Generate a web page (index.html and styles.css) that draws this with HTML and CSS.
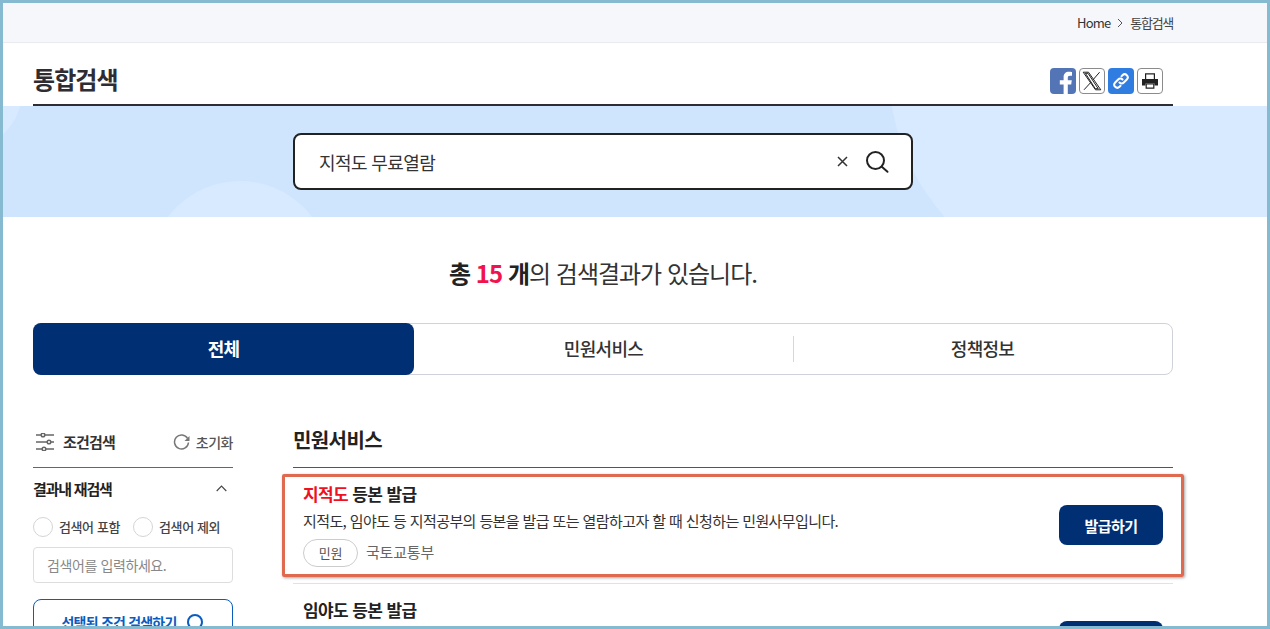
FILE: index.html
```html
<!DOCTYPE html>
<html lang="ko">
<head>
<meta charset="utf-8">
<title>통합검색</title>
<link rel="stylesheet" href="styles.css">
</head>
<body>
<div class="frame">
  <div class="topbar">
    <div class="wrap crumbs">
      <span>Home</span>
      <svg class="crumb-sep" width="6" height="10" viewBox="0 0 6 10"><path d="M1 1l4 4-4 4" fill="none" stroke="#555" stroke-width="1"/></svg>
      <span class="crumb-now">통합검색</span>
    </div>
  </div>
  <div class="wrap title-row">
    <h1>통합검색</h1>
    <div class="shares">
      <span class="share fb"><svg width="26" height="26" viewBox="0 0 26 26"><path d="M17.800 26V16.500h3.400l.6-4.200h-4V9.800c0-1.200.5-2.100 2.200-2.100h2V4.100c-.6-.1-1.900-.3-3.200-.3-3.100 0-5.200 1.900-5.200 5.300v3.200H9.800v4.200h3.800V26z" fill="#fff"/></svg></span>
      <span class="share plain"><svg width="20" height="20" viewBox="0 0 20 20"><path d="M1.200 1.200h5.300l12.300 17.600h-5.300zM3.400 2.300l9.900 15.400h2.900L6 2.300zM17.600 1.200L11 8.800M9 11.200L2 18.800" fill="none" stroke="#222" stroke-width="1"/></svg></span>
      <span class="share link"><svg width="18" height="18" viewBox="0 0 18 18"><g fill="none" stroke="#fff" stroke-width="2" stroke-linecap="round"><path d="M7.500 10.500a3 3 0 0 0 4.300 0l3-3a3 3 0 0 0-4.300-4.300L9.500 4.300"/><path d="M10.500 7.500a3 3 0 0 0-4.300 0l-3 3a3 3 0 0 0 4.300 4.300l1-1"/></g></svg></span>
      <span class="share plain"><svg width="18" height="16" viewBox="0 0 18 16"><path d="M4.600 6.500V.8h8.800v5.700" fill="none" stroke="#222" stroke-width="1.200"/><path d="M1 6h16v6.500h-3.500V10.500h-9v2H1z" fill="#222"/><path d="M5.200 11h7.600v4.200H5.200z" fill="#fff" stroke="#222" stroke-width="1.200"/></svg></span>
    </div>
  </div>
  <section class="band">
    <span class="deco deco-a"></span>
    <span class="deco deco-b"></span>
    <span class="deco deco-c"></span>
    <div class="searchbox">
      <span class="query">지적도 무료열람</span>
      <svg width="11" height="11" viewBox="0 0 11 11"><path d="M1 1l9 9M10 1l-9 9" stroke="#333" stroke-width="1.500"/></svg>
      <svg class="search-ico" width="24" height="24" viewBox="0 0 24 24"><circle cx="10.500" cy="10.500" r="8.500" fill="none" stroke="#222" stroke-width="2"/><path d="M16.800 16.800l5.700 5" stroke="#222" stroke-width="2" stroke-linecap="round"/></svg>
    </div>
  </section>
  <p class="wrap summary"><b>총 <em>15</em> 개</b>의 검색결과가 있습니다.</p>
  <div class="wrap">
    <div class="tabs">
      <div class="tab active">전체</div>
      <div class="tab">민원서비스</div>
      <div class="tab divided">정책정보</div>
    </div>
  </div>
  <div class="wrap content">
    <aside class="side">
      <div class="side-head">
        <span class="side-title">
          <svg width="18" height="18" viewBox="0 0 18 18"><g fill="#fff" stroke="#666" stroke-width="1.500"><path d="M0 2h18M0 9h18M0 16h18"/><circle cx="7" cy="2" r="1.800"/><circle cx="13" cy="9" r="1.800"/><circle cx="8" cy="16" r="1.800"/></g></svg>
          조건검색
        </span>
        <span class="reset">
          <svg width="17" height="17" viewBox="0 0 17 17"><path d="M14.600 5.500A7 7 0 1 0 15.500 9.500" fill="none" stroke="#777" stroke-width="1.500"/><path d="M16.500 3v5h-5z" fill="#777"/></svg>
          초기화
        </span>
      </div>
      <div class="side-sub">
        <span>결과내 재검색</span>
        <svg width="11" height="7" viewBox="0 0 11 7"><path d="M.7 6l4.800-5 4.800 5" fill="none" stroke="#444" stroke-width="1.100"/></svg>
      </div>
      <div class="radios">
        <label class="radio"><i></i>검색어 포함</label>
        <label class="radio"><i></i>검색어 제외</label>
      </div>
      <div class="side-input">검색어를 입력하세요.</div>
      <div class="side-btn">선택된 조건 검색하기
        <svg width="18" height="18" viewBox="0 0 18 18"><circle cx="9" cy="9" r="7" fill="none" stroke="#0a5cc0" stroke-width="2"/></svg>
      </div>
    </aside>
    <main class="results">
      <h2>민원서비스</h2>
      <article class="item">
        <div class="item-body">
          <h3><mark>지적도</mark> 등본 발급</h3>
          <p>지적도, 임야도 등 지적공부의 등본을 발급 또는 열람하고자 할 때 신청하는 민원사무입니다.</p>
          <div class="meta"><span class="pill">민원</span><span class="org">국토교통부</span></div>
        </div>
        <a class="action">발급하기</a>
        <span class="highlight"></span>
      </article>
      <article class="item">
        <div class="item-body">
          <h3>임야도 등본 발급</h3>
        </div>
        <a class="action">발급하기</a>
      </article>
    </main>
  </div>
</div>
</body>
</html>
```
FILE: styles.css
```css
* { box-sizing: border-box; }
html, body { margin: 0; height: 100%; }
body { font-family: "Noto Sans CJK KR", "Noto Sans", sans-serif; color: #222; overflow: hidden; background: #fff; }
.frame { width: 1270px; height: 629px; border: 3px solid #86bad0; overflow: hidden; background: #fff; }
.wrap { width: 1140px; margin-left: 30px; }
.topbar { height: 40px; background: #f5f7fb; border-bottom: 1px solid #e8eaef; }
.crumbs { height: 39px; display: flex; justify-content: flex-end; align-items: center; gap: 7px; font-size: 13px; letter-spacing: -0.8px; color: #333; }
.crumb-now { letter-spacing: -1.3px; color: #444; }
.title-row { height: 63px; border-bottom: 2px solid #2d2d33; display: flex; justify-content: space-between; align-items: flex-end; padding-bottom: 8px; }
h1 { margin: 0; font-size: 24px; line-height: 34px; font-weight: 700; letter-spacing: -0.9px; color: #2d2d33; }
.shares { display: flex; gap: 3px; margin-right: 10px; margin-bottom: 2px; }
.share { width: 26px; height: 26px; border-radius: 4px; display: flex; align-items: center; justify-content: center; overflow: hidden; }
.fb { background: #5374b5; }
.link { background: #2f7de1; }
.plain { border: 1px solid #8b8b8b; background: #fff; }
.band { position: relative; height: 111px; background: #cfe5fe; overflow: hidden; display: flex; align-items: flex-start; padding: 27px 0 0 290px; }
.deco { position: absolute; border-radius: 50%; background: #d8eaff; }
.deco-a { left: 147px; top: 75px; width: 180px; height: 180px; }
.deco-b { left: 886px; top: -258px; width: 444px; height: 444px; }
.deco-c { left: -99px; top: -74px; width: 118px; height: 118px; }
.searchbox { position: relative; width: 620px; height: 57px; background: #fff; border: 2px solid #222; border-radius: 8px; display: flex; align-items: center; padding: 0 22px 0 24px; gap: 17px; }
.query { flex: 1; font-size: 18px; letter-spacing: -0.6px; color: #333; }
.search-ico { flex: none; }
.summary { margin-top: 38px; margin-bottom: 0; height: 36px; text-align: center; font-size: 24px; line-height: 36px; letter-spacing: -1px; color: #333; }
.summary b { font-weight: 700; color: #222; }
.summary em { font-style: normal; color: #f0134d; }
.tabs { margin-top: 32px; height: 52px; border: 1px solid #cfd2d8; border-radius: 8px; display: flex; }
.tab { flex: 1; display: flex; align-items: center; justify-content: center; padding-bottom: 2px; font-size: 18px; font-weight: 500; letter-spacing: -0.7px; color: #333; position: relative; }
.tab.active { margin: -1px 0 -1px -1px; flex: none; width: 381px; background: #012f74; color: #fff; font-weight: 700; border-radius: 8px; }
.tab.divided::before { content: ""; position: absolute; left: 0; top: 12px; bottom: 12px; width: 1px; background: #d5d7dc; }
.content { display: flex; gap: 60px; margin-top: 48px; }
.side { width: 200px; flex: none; }
.side-head { height: 45px; border-bottom: 1px solid #666; display: flex; align-items: center; justify-content: space-between; padding-bottom: 7px; }
.side-title { display: flex; align-items: center; gap: 9px; font-size: 15px; font-weight: 700; letter-spacing: -0.8px; padding-left: 3px; color: #333; }
.reset { display: flex; align-items: center; gap: 6px; font-size: 14px; font-weight: 500; letter-spacing: -0.5px; color: #555; }
.side-sub { height: 41px; display: flex; justify-content: space-between; align-items: center; font-size: 15px; font-weight: 700; letter-spacing: -1.2px; padding-right: 6px; color: #222; }
.radios { display: flex; gap: 13px; margin-top: 8px; height: 20px; }
.radio { display: flex; align-items: center; gap: 6px; padding-bottom: 2px; font-size: 13px; letter-spacing: -0.4px; color: #444; font-weight: 500; }
.radio i { width: 20px; height: 20px; margin-bottom: -2px; border-radius: 50%; border: 1px solid #d5d5d5; background: #fff; }
.side-input { margin-top: 10px; height: 36px; border: 1px solid #ddd; border-radius: 4px; display: flex; align-items: center; padding-left: 13px; font-size: 14px; letter-spacing: -0.4px; color: #888; }
.side-btn { margin-top: 16px; height: 46px; border: 1px solid #0a5cc0; border-radius: 8px; display: flex; align-items: center; justify-content: center; gap: 10px; font-size: 14px; font-weight: 700; letter-spacing: -0.8px; color: #0a5cc0; }
.results { flex: 1; min-width: 0; }
h2 { margin: 0; height: 45px; border-bottom: 1px solid #555; font-size: 20px; line-height: 33px; font-weight: 700; letter-spacing: -0.6px; color: #222; }
.item { position: relative; display: flex; align-items: center; justify-content: space-between; height: 116px; padding: 0 10px; border-bottom: 1px solid #e2e2e2; }
.item-body { align-self: flex-start; padding-top: 14px; }
h3 { margin: 0; font-size: 17px; line-height: 24px; font-weight: 700; letter-spacing: -0.6px; color: #222; }
mark { background: none; color: #ef1020; }
.item p { margin: 4px 0 0; font-size: 15px; line-height: 22px; letter-spacing: -0.6px; color: #333; }
.meta { display: flex; align-items: center; gap: 8px; margin-top: 7px; }
.pill { width: 55px; height: 28px; padding-bottom: 1px; border: 1px solid #ccc; border-radius: 14px; display: flex; align-items: center; justify-content: center; font-size: 13px; letter-spacing: -0.3px; color: #555; }
.org { padding-bottom: 3px; font-size: 15px; letter-spacing: -0.2px; color: #666; }
.action { width: 104px; height: 40px; background: #012f74; color: #fff; border-radius: 8px; display: flex; align-items: center; justify-content: center; font-size: 15px; font-weight: 700; letter-spacing: -0.5px; margin-top: -1px; }
.highlight { position: absolute; left: -11px; right: -11px; top: 6px; height: 103px; border: 3px solid #df6a50; border-radius: 2px; box-shadow: 1px 1px 3px rgba(0,0,0,.35); pointer-events: none; }
```
